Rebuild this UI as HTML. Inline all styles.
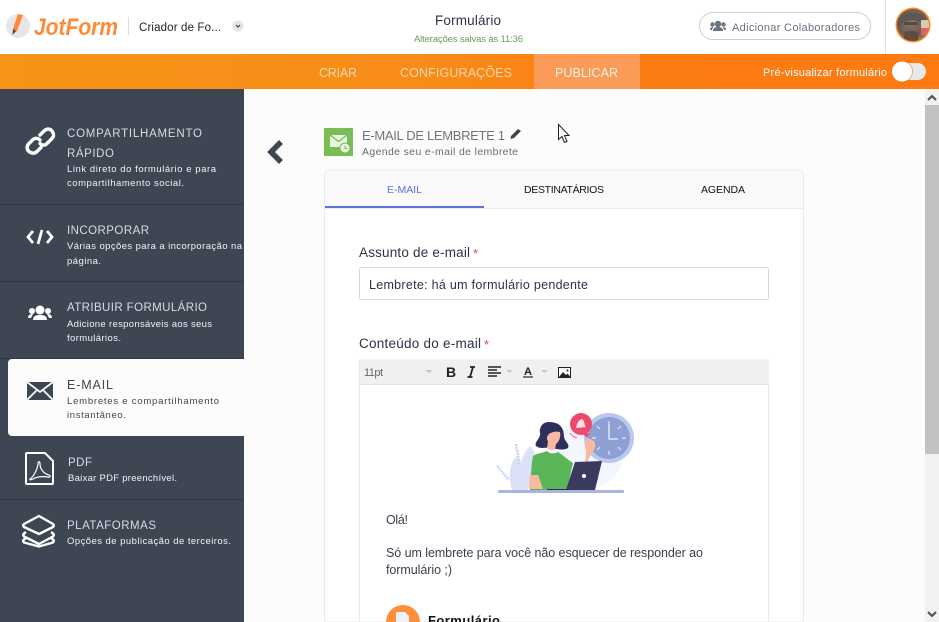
<!DOCTYPE html>
<html lang="pt"><head><meta charset="utf-8"><title>JotForm</title>
<style>
html,body{margin:0;padding:0;width:939px;height:622px;overflow:hidden;background:#fff}
svg{display:block}
text{font-family:"Liberation Sans",sans-serif;white-space:pre}
.t{font-size:11.500px;fill:#d9dce1}
.s{font-size:9.500px;fill:#f2f3f5}
.l{font-size:13.500px;fill:#2c3345}
.b{font-size:12.500px;fill:#3a3f4c}
</style></head><body>
<svg width="939" height="622" viewBox="0 0 939 622" xmlns="http://www.w3.org/2000/svg">
<defs>
<linearGradient id="o" x1="0" x2="1" y1="0" y2="0"><stop offset="0" stop-color="#f59418"/><stop offset=".45" stop-color="#f78c18"/><stop offset=".7" stop-color="#fd7c12"/><stop offset="1" stop-color="#ff7a12"/></linearGradient>
<radialGradient id="av" cx=".45" cy=".4" r=".7"><stop offset="0" stop-color="#8a7768"/><stop offset=".6" stop-color="#6c5a4e"/><stop offset="1" stop-color="#a08a78"/></radialGradient>
<clipPath id="avc"><circle cx="913" cy="25" r="16"/></clipPath>
</defs>

<rect width="939" height="622" fill="#fcfcfa"/>
<!-- header -->
<rect width="939" height="54" fill="#fff"/>
<circle cx="18" cy="26" r="12" fill="#e6e6e6"/>
<path d="M18 14l5 1-6 16-4 3 0-5z" fill="#ff8a35"/><path d="M13 29l3 2-3.500 4z" fill="#444"/>
<text x="34" y="35" font-size="24" font-weight="700" font-style="italic" fill="#ff8a35" textLength="84" lengthAdjust="spacingAndGlyphs">JotForm</text>
<rect x="128" y="17" width="1" height="18" fill="#ddd"/>
<text x="139" y="31" font-size="11.500" fill="#222" textLength="82">Criador de Fo...</text>
<circle cx="238" cy="26" r="5.500" fill="#e3e5ea"/><path d="M236 25l2 2 2-2" fill="none" stroke="#444" stroke-width="1.200"/>
<text x="435" y="25" font-size="13.500" fill="#2c3345" textLength="66">Formulário</text>
<text x="414" y="42" font-size="9.500" fill="#6c9a58" textLength="109">Alterações salvas às 11:36</text>
<rect x="699.500" y="12.500" width="171" height="27" rx="13.500" fill="#fff" stroke="#c6d2d6"/>
<g fill="#6b7280"><circle cx="718" cy="24" r="3.200"/><circle cx="712.500" cy="24.500" r="2.200"/><circle cx="723.500" cy="24.500" r="2.200"/><path d="M713 31c0-3 2-4 5-4s5 1 5 4z"/><path d="M710 30c0-2 1-3 3-3l-1 3zM726 30c0-2-1-3-3-3l1 3z"/></g>
<text x="732" y="31" font-size="11" fill="#6b7280" textLength="128">Adicionar Colaboradores</text>
<rect x="885" y="0" width="1" height="54" fill="#dfe1e4"/>
<circle cx="913" cy="25" r="17.500" fill="#ff8a1f"/>
<g clip-path="url(#avc)"><rect x="896" y="8" width="34" height="34" fill="url(#av)"/><path d="M897 24c-1-13 22-16 28-5l-2 5c-6-5-15-5-21 0l-2 6z" fill="#5b5856"/><rect x="904" y="22" width="14" height="3" fill="#4a423e" opacity=".8"/><path d="M904 33c4-3 11-3 14 0v9h-14z" fill="#5d4b44"/><rect x="921" y="28" width="7" height="7" fill="#d9656a"/><rect x="921" y="20" width="8" height="8" fill="#d8c8b4"/></g>

<!-- orange bar -->
<rect y="54" width="939" height="35" fill="url(#o)"/>
<rect x="534" y="54" width="106" height="35" fill="#fa9c58"/>
<text x="319" y="77" font-size="12.500" fill="#fcd6ae" textLength="38">CRIAR</text>
<text x="400" y="77" font-size="12.500" fill="#fcd6ae" textLength="112">CONFIGURAÇÕES</text>
<text x="555" y="77" font-size="12.500" fill="#fff0e2" textLength="63">PUBLICAR</text>
<text x="763" y="76" font-size="11" fill="#fff" textLength="124">Pré-visualizar formulário</text>
<rect x="893" y="63" width="33" height="17" rx="8.500" fill="#e9e9ec"/>
<circle cx="902" cy="71.500" r="11" fill="#e8721a" opacity=".5"/>
<circle cx="902" cy="71.500" r="10" fill="#fff"/>

<!-- scrollbar -->
<rect x="925" y="89" width="14" height="533" fill="#f1f1f1"/>
<rect x="925" y="105" width="14" height="349" fill="#c1c1c1"/>
<path d="M928 100l4-4 4 4" fill="none" stroke="#505050" stroke-width="2"/>
<path d="M928 612l4 4 4-4" fill="none" stroke="#505050" stroke-width="2"/>

<!-- sidebar -->
<rect y="89" width="244" height="533" fill="#3e4553"/>
<g fill="#2f3541"><rect y="204" width="244" height="1"/><rect y="281" width="244" height="1"/><rect y="358" width="244" height="1"/><rect y="499" width="244" height="1"/></g>
<path d="M244 359H12a4 4 0 0 0-4 4v69a4 4 0 0 0 4 4h232z" fill="#fcfcfa"/>

<!-- link -->
<g fill="none" stroke="#fff" stroke-width="3.400" stroke-linecap="round"><path d="M40 135l4-4c2.500-2.500 6-2.500 8 0s2 5.500 0 7.500l-5 5c-2.500 2.500-5 2-7 0"/><path d="M40 140c-2-2-5-2.500-7.500 0l-3.500 3.500c-2.500 2.500-2.500 6 0 8s5.500 2.500 8 0l4-4"/></g>
<text class="t" x="67" y="137" textLength="135">COMPARTILHAMENTO</text>
<text class="t" x="67" y="157" textLength="47">RÁPIDO</text>
<text class="s" x="67" y="172" textLength="149">Link direto do formulário e para</text>
<text class="s" x="67" y="186" textLength="117">compartilhamento social.</text>
<!-- code -->
<path d="M33 231l-5 6 5 6M47 231l5 6-5 6M42 230l-4 14" fill="none" stroke="#fff" stroke-width="2.800"/>
<text class="t" x="67" y="234" textLength="82">INCORPORAR</text>
<text class="s" x="67" y="249" textLength="175">Várias opções para a incorporação na</text>
<text class="s" x="67" y="264" textLength="34">página.</text>
<!-- people -->
<g fill="#fff"><circle cx="40" cy="310" r="4.500"/><circle cx="32" cy="311" r="3"/><circle cx="48" cy="311" r="3"/><path d="M33 320c0-4 3-5 7-5s7 1 7 5z"/><path d="M28 318c0-3 2-4 5-4l-2 4zM52 318c0-3-2-4-5-4l2 4z"/></g>
<text class="t" x="67" y="311" textLength="140">ATRIBUIR FORMULÁRIO</text>
<text class="s" x="67" y="327" textLength="145">Adicione responsáveis aos seus</text>
<text class="s" x="67" y="341" textLength="54">formulários.</text>
<!-- mail -->
<rect x="27" y="382" width="26" height="18" fill="#3e4553"/>
<path d="M27 382l13 10 13-10M27 400l10-10M53 400l-10-10" fill="none" stroke="#fcfcfa" stroke-width="1.800"/>
<text x="67" y="389" font-size="12.500" fill="#3e4553" textLength="46">E-MAIL</text>
<text class="s" x="67" y="404" style="fill:#3e4553" textLength="152">Lembretes e compartilhamento</text>
<text class="s" x="67" y="418" style="fill:#3e4553" textLength="59">instantâneo.</text>
<!-- pdf -->
<path d="M27 453h18l8 8v22a.8.8 0 0 1-1 1H27a.8.8 0 0 1-1-1v-29a.8.8 0 0 1 1-1z" fill="none" stroke="#fff" stroke-width="2"/>
<path d="M30 479c3-2 7-8 8-15 0-3 2-3 2 0 0 5 4 10 9 11 2 1 1 3-1 2-6-1-12 0-15 2-2 1-4 1-3 0z" fill="none" stroke="#fff" stroke-width="1.200"/>
<text class="t" x="68" y="466" textLength="24">PDF</text>
<text class="s" x="68" y="481" textLength="109">Baixar PDF preenchível.</text>
<!-- layers -->
<g fill="none" stroke="#fff" stroke-width="2.400" stroke-linejoin="round"><path d="M26 532l-2 1.500c-1 1-1 2 0 3l15 7.500 14-7.500c1-1 1-2 0-3l-2-1.500"/><path d="M26 538l-2 1.500c-1 1-1 2 0 3l15 4 14-4c1-1 1-2 0-3l-2-1.500"/><path d="M39 516l14 8c1 1 1 2 0 3l-14 7-15-7c-1-1-1-2 0-3z" fill="#3e4553"/></g>
<text class="t" x="67" y="529" textLength="89">PLATAFORMAS</text>
<text class="s" x="67" y="544" textLength="164">Opções de publicação de terceiros.</text>

<!-- back chevron -->
<path d="M281 142l-10 10 10 10" fill="none" stroke="#3e4553" stroke-width="5.500"/>

<!-- title -->
<rect x="324" y="128" width="29" height="28" rx="1" fill="#7abc56"/>
<path d="M330 135h17v12h-17z" fill="#e8f4df"/><path d="M330 135l8.500 6.500 8.500-6.500" fill="none" stroke="#7abc56" stroke-width="1.300"/>
<circle cx="345" cy="148" r="5" fill="#e8f4df" stroke="#7abc56"/><path d="M345 145.500v3h2.500" fill="none" stroke="#7abc56"/>
<text x="362" y="140" font-size="13" fill="#6f7580" textLength="143">E-MAIL DE LEMBRETE 1</text>
<path d="M511 136l7-7 3 2-7 7-3.500 1z" fill="#444"/>
<text x="362" y="155" font-size="10.500" fill="#666b75" textLength="156">Agende seu e-mail de lembrete</text>

<!-- cursor -->
<path d="M558.500 124.500v15l3.500-3 2.500 6 2.500-1-2.500-6h4.500z" fill="#fff" stroke="#222" stroke-width="1"/>

<!-- card -->
<path d="M324.500 622V175a5 5 0 0 1 5-5h469a5 5 0 0 1 5 5v447z" fill="#fff" stroke="#e8eaef"/>
<path d="M325 208v-33a4.500 4.500 0 0 1 4.500-4.500h469a4.500 4.500 0 0 1 4.500 4.500v33z" fill="#fafafc"/>
<rect x="325" y="208" width="478" height="1" fill="#e8eaef"/>
<rect x="325" y="206" width="159" height="2" fill="#5b74e0"/>
<text x="387" y="193" font-size="10.500" fill="#5b74e0" textLength="35">E-MAIL</text>
<text x="524" y="193" font-size="10.500" fill="#111" textLength="80">DESTINATÁRIOS</text>
<text x="701" y="193" font-size="10.500" fill="#111" textLength="44">AGENDA</text>

<text class="l" x="359" y="257" textLength="111">Assunto de e-mail</text>
<text x="473" y="258" font-size="13" fill="#f23a5c">*</text>
<rect x="359.500" y="267.500" width="409" height="32" rx="2" fill="#fff" stroke="#d5d9ee"/>
<text x="369" y="289" font-size="12.500" fill="#2c3345" textLength="219">Lembrete: há um formulário pendente</text>

<text class="l" x="359" y="348" textLength="122">Conteúdo do e-mail</text>
<text x="484" y="349" font-size="13" fill="#f23a5c">*</text>

<!-- editor -->
<rect x="359.500" y="360" width="409" height="262" fill="#fff" stroke="#e8e8ec"/>
<rect x="360" y="360" width="409" height="25" fill="#f0f0f0"/>
<rect x="360" y="384" width="409" height="1" fill="#e3e3e3"/>
<text x="364" y="376" font-size="11" fill="#666" textLength="19">11pt</text>
<path d="M425 370h8l-4 3z" fill="#c8c8c8"/>
<text x="446" y="377" font-size="14" font-weight="700" fill="#222">B</text>
<path d="M470 367h5M467.500 377h5M473 367l-3 10" stroke="#222" stroke-width="1.800" fill="none"/>
<path d="M488 367h13M488 370h9M488 373h13M488 376h9" stroke="#222" stroke-width="1.500"/>
<path d="M506 370h7l-3.500 3z" fill="#c8c8c8"/>
<text x="524" y="375" font-size="11" font-weight="700" fill="#222">A</text>
<rect x="523" y="376" width="10" height="2" fill="#777"/>
<path d="M541 370h7l-3.500 3z" fill="#c8c8c8"/>
<rect x="558.500" y="367.500" width="12" height="10" fill="#fff" stroke="#222"/>
<path d="M559 377l4-5 3 3 1.500-1.500 3 3.500z" fill="#222"/><circle cx="567.500" cy="370.500" r="1" fill="#222"/>

<!-- illustration -->
<ellipse cx="582" cy="458" rx="40" ry="32" fill="#f4f6fe"/>
<path d="M512 490c-4-12-3-24 4-34 3 3 4 6 5 8 1-6 3-12 9-18 5 4 6 12 4 22-1 8-3 16-6 22z" fill="#dbe2f7"/>
<path d="M497 466l12 14M516 444l4 22" stroke="#c9d3f0" stroke-width="2.500" stroke-dasharray="2 1"/>
<circle cx="609" cy="438" r="25" fill="#bac8ef"/>
<circle cx="609" cy="438" r="21" fill="#8e9fd3"/>
<path d="M609 421v4M609 451v4M592 438h4M622 438h4M597 426l3 3M621 426l-3 3M597 450l3-3M621 450l-3-3" stroke="#dfe5f8" stroke-width="1.200"/>
<path d="M609 424v15h9" fill="none" stroke="#eef1fb" stroke-width="1.300"/>
<circle cx="581" cy="424" r="11" fill="#ef4a6e"/>
<path d="M576 428c1-4 2-8 6-9 3 2 2 6 4 8z" fill="#fde0e6"/>
<path d="M583 434l7-1-3 5z" fill="#ef4a6e"/>
<path d="M570 433c2 3 4 4 7 5" fill="none" stroke="#ef4a6e" stroke-width=".8"/>
<path d="M549 422c-7 0-10 6-9 11 1 5-6 9-4 13 4 3 9 2 13 1 6 2 14 4 19 1 2-4-3-6-4-11 0-8-3-15-15-15z" fill="#2f2f5c"/>
<path d="M549 434c2-2 8-3 11-2 1 5-1 10-4 12l-1 5c-2 2-6 1-8-1l1-7c-2-2-1-5 1-7z" fill="#f9b9a0"/>
<path d="M533 456c4-3 10-3 14-5 3 3 7 3 11 1 5 3 10 8 15 11l-6 27h-37c1-12 1-24 3-34z" fill="#5bb65a"/>
<path d="M530 475h8l5 14h-14z" fill="#f9b9a0"/>
<path d="M585 461c1-6 2-9 0-13 0-5 1-9 2-9 4-1 6 1 8 4 1 4-1 8-3 9-2 4-3 8-5 10z" fill="#f9b9a0"/>
<path d="M575 462l27-1-7 29h-29z" fill="#3a3a5e"/>
<circle cx="584" cy="476" r="2" fill="#fff"/>
<path d="M547 489h22v1.500h-22z" fill="#2f2f5c"/>
<rect x="498" y="490" width="126" height="3" rx="1" fill="#a8b6dc"/>

<!-- email body -->
<text class="b" x="386" y="524" textLength="22">Olá!</text>
<text class="b" x="386" y="557" textLength="317">Só um lembrete para você não esquecer de responder ao</text>
<text class="b" x="386" y="574" textLength="66">formulário ;)</text>
<circle cx="403" cy="622" r="17" fill="#ff8f38"/>
<path d="M396 622v-10h9l4 4v6z" fill="#eef0fb"/>
<text x="428" y="625" font-size="13" font-weight="700" fill="#111" textLength="72">Formulário</text>
</svg>
</body></html>
